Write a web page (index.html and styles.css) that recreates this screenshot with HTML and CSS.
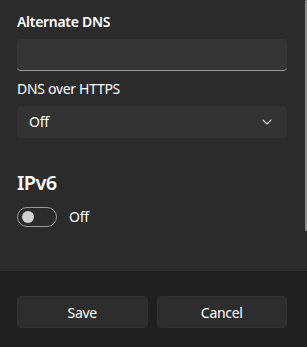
FILE: index.html
```html
<!DOCTYPE html>
<html lang="en">
<head>
<meta charset="utf-8">
<title>DNS settings</title>
<link rel="stylesheet" href="styles.css">
</head>
<body>
<div class="panel">
  <div class="content">
    <div class="field-label strong">Alternate DNS</div>
    <div class="text-input"></div>
    <div class="field-label">DNS over HTTPS</div>
    <div class="select">
      <span>Off</span>
      <svg class="chevron" width="10" height="6" viewBox="0 0 10 6"><path d="M1 1 L5 5 L9 1" fill="none" stroke="#cfcfcf" stroke-width="1.1" stroke-linecap="round" stroke-linejoin="round"/></svg>
    </div>
    <h2 class="section-title">IPv6</h2>
    <div class="toggle-row">
      <span class="toggle"><span class="thumb"></span></span>
      <span class="toggle-text">Off</span>
    </div>
  </div>
  <div class="footer">
    <button class="btn">Save</button>
    <button class="btn">Cancel</button>
  </div>
  <div class="scrollbar"></div>
</div>
</body>
</html>
```
FILE: styles.css
```css
html, body {
  margin: 0;
  padding: 0;
  background: #202020;
}
body {
  font-family: "Noto Sans", "Open Sans", sans-serif;
  color: #ffffff;
  font-size: 14px;
  letter-spacing: -0.3px;
}
.panel {
  position: relative;
  width: 307px;
  height: 347px;
  display: flex;
  flex-direction: column;
}
.content {
  height: 271px;
  box-sizing: border-box;
  background: #2b2b2b;
  padding: 12px 20px 0 17px;
  display: flex;
  flex-direction: column;
}
.field-label {
  line-height: 20px;
  height: 20px;
  font-size: 14px;
}
.field-label.strong {
  font-weight: 600;
}
.text-input {
  margin-top: 7px;
  height: 32px;
  box-sizing: border-box;
  background: #353535;
  border-radius: 4px;
  border-bottom: 1px solid #9a9a9a;
  margin-bottom: 8px;
}
.select {
  margin-top: 7px;
  height: 32px;
  box-sizing: border-box;
  background: #333333;
  border-radius: 4px;
  display: flex;
  align-items: center;
  justify-content: space-between;
  padding: 0 15px 0 12px;
  line-height: 20px;
}
.chevron {
  display: block;
}
.section-title {
  margin: 31px 0 0 0;
  font-size: 20px;
  font-weight: 600;
  line-height: 28px;
  height: 28px;
  letter-spacing: -0.6px;
}
.toggle-row {
  margin-top: 10px;
  display: flex;
  align-items: center;
  gap: 12px;
  line-height: 20px;
}
.toggle {
  width: 40px;
  height: 20px;
  box-sizing: border-box;
  border: 1px solid #9a9a9a;
  border-radius: 10px;
  display: flex;
  align-items: center;
  padding-left: 4px;
}
.thumb {
  width: 12px;
  height: 12px;
  border-radius: 50%;
  background: #d0d0d0;
}
.footer {
  flex: 1;
  border-top: 1px solid #1c1c1c;
  background: #202020;
  display: flex;
  gap: 9px;
  padding: 24px 20px 0 17px;
}
.btn {
  flex: 1;
  height: 32px;
  background: #2d2d2d;
  border: 1px solid #303030;
  border-radius: 4px;
  color: #ffffff;
  font-family: inherit;
  font-size: 14px;
  letter-spacing: -0.3px;
  padding: 0;
}
.scrollbar {
  position: absolute;
  right: 0;
  top: 0;
  width: 2px;
  height: 231px;
  background: #8e8e8e;
  border-radius: 1px;
}
```
